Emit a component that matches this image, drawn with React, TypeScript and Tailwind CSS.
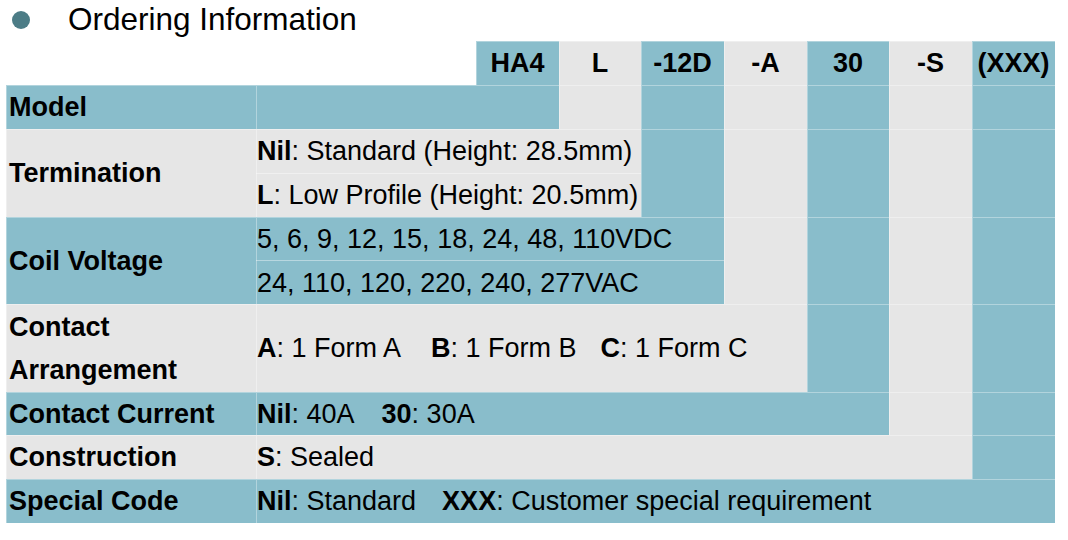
import React from "react";

const BLUE = "bg-[#89bdcb]";
const GRAY = "bg-[#e6e6e6]";
const LINE = "shadow-[inset_1px_1px_0_rgba(255,255,255,0.35)]";

const codes = ["HA4", "L", "-12D", "-A", "30", "-S", "(XXX)"];
const spans = ["col-span-2", "col-span-3", "col-span-4", "col-span-5", "col-span-6", "col-span-7", "col-span-8"];

const colColor = (i: number) => (i % 2 === 0 ? BLUE : GRAY);

type Row = { label: React.ReactNode; desc: React.ReactNode };

const B = ({ children }: { children: React.ReactNode }) => <b className="font-bold">{children}</b>;

const SubLines = ({ lines }: { lines: React.ReactNode[] }) => (
  <div className="flex flex-col h-full">
    {lines.map((l, i) => (
      <div
        key={i}
        className={`flex-1 flex items-center pl-[1px] pt-[1px] ${i > 0 ? "border-t border-white/40" : ""}`}
      >
        {l}
      </div>
    ))}
  </div>
);

const rows: Row[] = [
  { label: "Model", desc: null },
  {
    label: "Termination",
    desc: (
      <SubLines
        lines={[
          <span>
            <B>Nil</B>: Standard (Height: 28.5mm)
          </span>,
          <span>
            <B>L</B>: Low Profile (Height: 20.5mm)
          </span>,
        ]}
      />
    ),
  },
  {
    label: "Coil Voltage",
    desc: (
      <SubLines
        lines={[<span>5, 6, 9, 12, 15, 18, 24, 48, 110VDC</span>, <span>24, 110, 120, 220, 240, 277VAC</span>]}
      />
    ),
  },
  {
    label: (
      <div className="flex flex-col leading-[43px]">
        <span>Contact</span>
        <span>Arrangement</span>
      </div>
    ),
    desc: (
      <div className="h-full flex items-center pl-[1px] pt-[1px]">
        <span>
          <B>A</B>: 1 Form A
        </span>
        <span className="ml-[30px]">
          <B>B</B>: 1 Form B
        </span>
        <span className="ml-[24px]">
          <B>C</B>: 1 Form C
        </span>
      </div>
    ),
  },
  {
    label: "Contact Current",
    desc: (
      <div className="h-full flex items-center pl-[1px] pt-[1px]">
        <span>
          <B>Nil</B>: 40A
        </span>
        <span className="ml-[27px]">
          <B>30</B>: 30A
        </span>
      </div>
    ),
  },
  {
    label: "Construction",
    desc: (
      <div className="h-full flex items-center pl-[1px] pt-[1px]">
        <span>
          <B>S</B>: Sealed
        </span>
      </div>
    ),
  },
  {
    label: "Special Code",
    desc: (
      <div className="h-full flex items-center pl-[1px] pt-[1px]">
        <span>
          <B>Nil</B>: Standard
        </span>
        <span className="ml-[26px]">
          <B>XXX</B>: Customer special requirement
        </span>
      </div>
    ),
  },
];

export default function App() {
  return (
    <div
      className="w-[1068px] h-[540px] bg-white text-black overflow-hidden"
      style={{ fontFamily: '"Liberation Sans", Arial, Helvetica, sans-serif' }}
    >
      <div className="h-[40px] flex items-center">
        <div className="ml-[12px] w-[18px] h-[18px] rounded-full bg-[#4c7c86]" />
        <div className="ml-[38px] text-[31.5px] leading-none">Ordering Information</div>
      </div>
      <div className="mt-[1px] ml-[6px] grid grid-cols-[250px_220px_83px_82px_83px_83px_82px_83px_83px] grid-rows-[44px_44px_88px_87px_88px_43px_44px_44px] text-[27px] leading-none">
        {/* header row */}
        <div className="col-span-2 bg-white" />
        {codes.map((c, i) => (
          <div key={c} className={`${colColor(i)} ${LINE} flex items-center justify-center pt-[1px] font-bold`}>
            {c}
          </div>
        ))}
        {rows.map((r, ri) => {
          const rowColor = ri % 2 === 0 ? BLUE : GRAY;
          const cells: React.ReactNode[] = [];
          cells.push(
            <div key={`l${ri}`} className={`${rowColor} ${LINE} flex items-center pl-[3px] pt-[1px] font-bold`}>
              {r.label}
            </div>
          );
          cells.push(
            <div key={`d${ri}`} className={`${rowColor} ${LINE} ${spans[ri]}`}>
              {r.desc}
            </div>
          );
          for (let ci = ri + 1; ci < 7; ci++) {
            cells.push(<div key={`c${ri}-${ci}`} className={`${colColor(ci)} ${LINE}`} />);
          }
          return cells;
        })}
      </div>
    </div>
  );
}
